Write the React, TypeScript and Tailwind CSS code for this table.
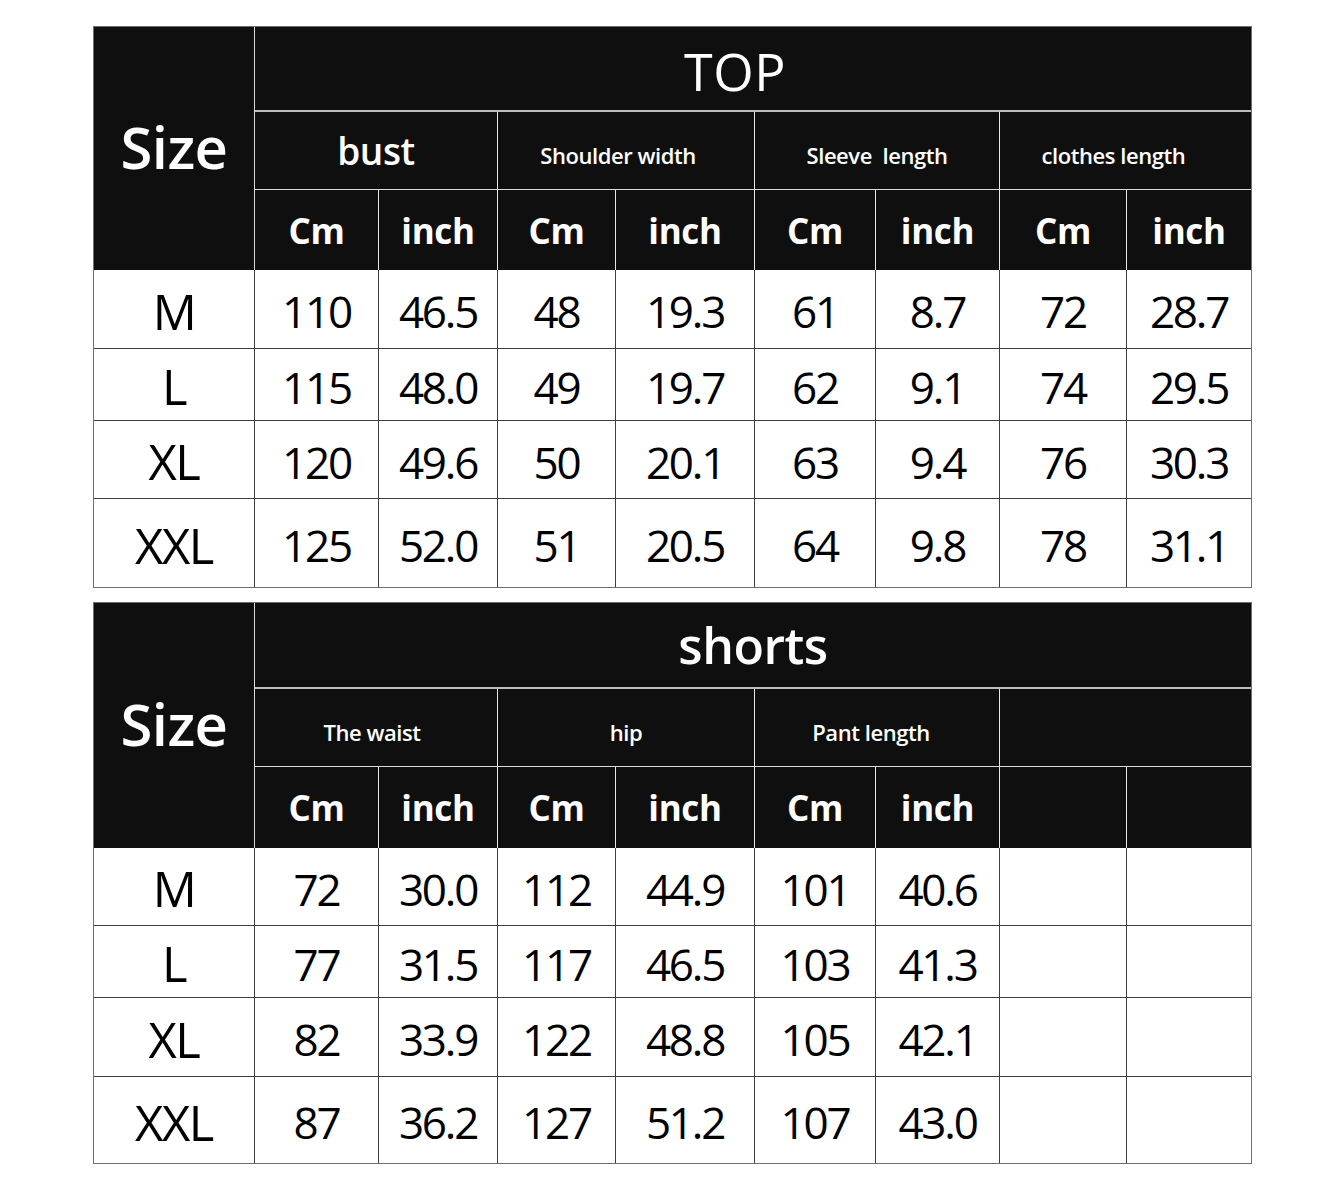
import type { ReactNode } from "react";

type Row = { size: string; values: string[] };

const topRows: Row[] = [
  { size: "M", values: ["110", "46.5", "48", "19.3", "61", "8.7", "72", "28.7"] },
  { size: "L", values: ["115", "48.0", "49", "19.7", "62", "9.1", "74", "29.5"] },
  { size: "XL", values: ["120", "49.6", "50", "20.1", "63", "9.4", "76", "30.3"] },
  { size: "XXL", values: ["125", "52.0", "51", "20.5", "64", "9.8", "78", "31.1"] },
];

const shortsRows: Row[] = [
  { size: "M", values: ["72", "30.0", "112", "44.9", "101", "40.6", "", ""] },
  { size: "L", values: ["77", "31.5", "117", "46.5", "103", "41.3", "", ""] },
  { size: "XL", values: ["82", "33.9", "122", "48.8", "105", "42.1", "", ""] },
  { size: "XXL", values: ["87", "36.2", "127", "51.2", "107", "43.0", "", ""] },
];

const font = { fontFamily: '"Open Sans", "Noto Sans", sans-serif' };

function HeadCell({ children, className = "" }: { children?: ReactNode; className?: string }) {
  return (
    <div className={`flex items-center justify-center bg-[#0f0f0f] leading-none text-white ${className}`}>
      {children}
    </div>
  );
}

function UnitRow({ units }: { units: boolean[] }) {
  return (
    <>
      {units.map((show, i) => (
        <HeadCell
          key={i}
          className={`text-[35px] font-bold tracking-[-0.01em] ${i < units.length - 1 ? "border-r border-[#e6e6e6]" : ""}`}
        >
          {show ? (i % 2 === 0 ? "Cm" : "inch") : null}
        </HeadCell>
      ))}
    </>
  );
}

function DataRows({ rows }: { rows: Row[] }) {
  return (
    <>
      {rows.map((row, r) => {
        const last = r === rows.length - 1;
        const line = last ? "" : "border-b border-[#3f3f3f]";
        return [
          <div
            key={`${r}-s`}
            className={`flex items-center justify-center border-r border-[#3f3f3f] pt-1 text-[49px] font-medium leading-none tracking-[-0.03em] text-black ${line}`}
          >
            {row.size}
          </div>,
          ...row.values.map((v, c) => (
            <div
              key={`${r}-${c}`}
              className={`flex items-center justify-center pt-1 text-[44px] font-medium leading-none tracking-[-0.05em] text-black ${
                c < row.values.length - 1 ? "border-r border-[#3f3f3f]" : ""
              } ${line}`}
            >
              {v}
            </div>
          )),
        ];
      })}
    </>
  );
}

function SizeTable({
  title,
  titleClass,
  groups,
  rows,
  rowsClass,
  units,
}: {
  title: string;
  titleClass: string;
  groups: { label: string; className: string }[];
  rows: Row[];
  rowsClass: string;
  units: boolean[];
}) {
  return (
    <div
      className={`grid w-[1159px] grid-cols-[161px_124px_119px_118px_139px_121px_124px_127px_124px] border border-[#6f6f6f] ${rowsClass}`}
    >
      <HeadCell className="row-span-3 border-r border-[#d9d9d9] pb-1 text-[58px] font-semibold tracking-[-0.01em]">
        Size
      </HeadCell>
      <HeadCell className={`col-span-8 border-b-2 border-[#bdbdbd] ${titleClass}`}>{title}</HeadCell>
      {groups.map((g, i) => (
        <HeadCell
          key={i}
          className={`col-span-2 border-b border-[#d9d9d9] ${i < groups.length - 1 ? "border-r border-r-[#e6e6e6]" : ""} ${g.className}`}
        >
          {g.label}
        </HeadCell>
      ))}
      <UnitRow units={units} />
      <DataRows rows={rows} />
    </div>
  );
}

export default function App() {
  return (
    <div className="min-h-[1192px] w-[1340px] bg-white pl-[93px] pt-[26px]" style={font}>
      <SizeTable
        title="TOP"
        titleClass="pr-[36px] pt-1 text-[52px] tracking-[0.01em]"
        groups={[
          { label: "bust", className: "text-[37px] font-semibold tracking-[-0.01em]" },
          { label: "Shoulder width", className: "pr-4 pt-2 text-[22px] font-semibold tracking-[-0.02em]" },
          { label: "Sleeve  length", className: "pt-2 text-[22px] font-semibold tracking-[-0.02em] whitespace-pre" },
          { label: "clothes length", className: "pr-6 pt-2 text-[22px] font-semibold tracking-[-0.02em]" },
        ]}
        rows={topRows}
        rowsClass="grid-rows-[85px_78px_80px_79px_72px_78px_88px]"
        units={[true, true, true, true, true, true, true, true]}
      />
      <div className="h-[14px]" />
      <SizeTable
        title="shorts"
        titleClass="text-[50px] font-semibold tracking-[-0.01em]"
        groups={[
          { label: "The waist", className: "pr-2 pt-2 text-[22px] font-semibold tracking-[-0.02em]" },
          { label: "hip", className: "pt-2 text-[22px] font-semibold tracking-[-0.02em]" },
          { label: "Pant length", className: "pr-3 pt-2 text-[22px] font-semibold tracking-[-0.02em]" },
          { label: "", className: "" },
        ]}
        rows={shortsRows}
        rowsClass="grid-rows-[86px_78px_81px_78px_72px_79px_86px]"
        units={[true, true, true, true, true, true, false, false]}
      />
    </div>
  );
}
